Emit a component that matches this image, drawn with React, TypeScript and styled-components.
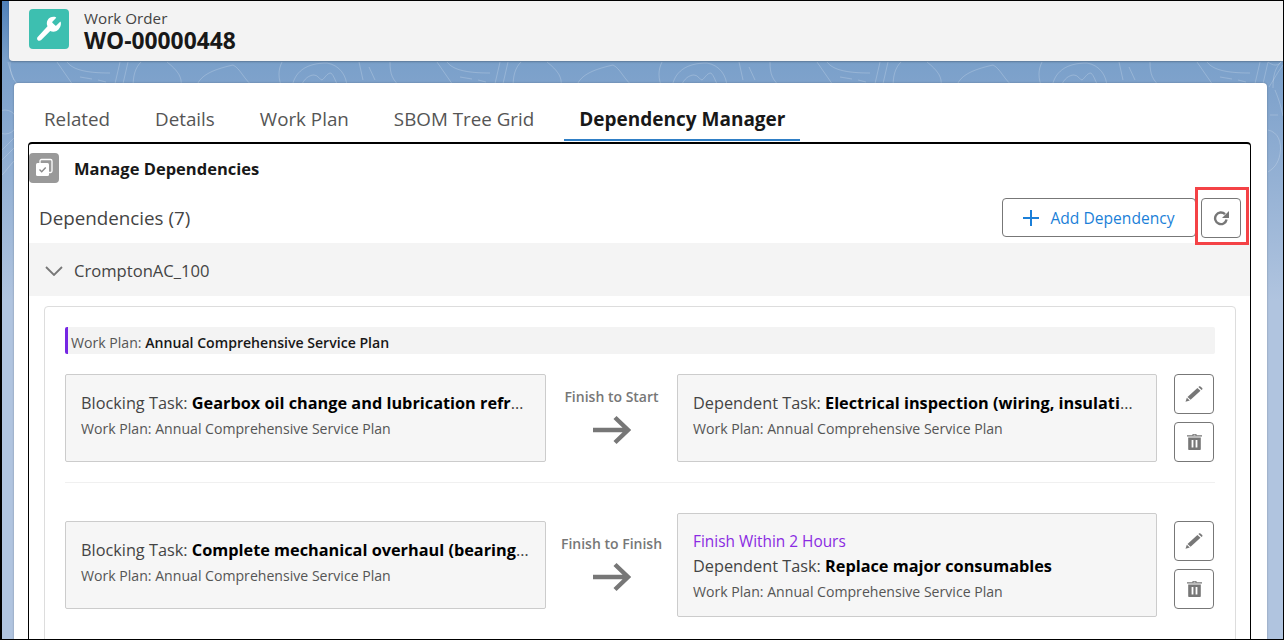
import styled, { createGlobalStyle } from 'styled-components'

const GlobalStyle = createGlobalStyle`
    html, body {
        margin: 0;
        padding: 0;
        height: 100%;
    }
    body {
        font-family: "Open Sans", "Noto Sans", "Liberation Sans", sans-serif;
        color: #181818;
        overflow: hidden;
    }
`
const Page = styled.div`
    position: relative;
    box-sizing: border-box;
    width: 1284px;
    height: 640px;
    overflow: hidden;
    border: 1px solid #000;
    border-left-width: 2px;
    background: linear-gradient(180deg, #4f80b8 0, #7aa0ca 60px, #80a3cc 90px, #b0c4df 300px, #b0c4df 100%);
`
const Contours = styled.svg`
    position: absolute;
    left: -2px;
    top: -1px;
    width: 1284px;
    height: 640px;
`
const Layers = styled.div`
    position: relative;
    display: flex;
    flex-direction: column;
    padding-left: 7px;
`
const Highlight = styled.div`
    box-sizing: border-box;
    position: absolute;
    left: 1193px;
    top: 186px;
    width: 54px;
    height: 58px;
    border: 3px solid #f44246;
`
const Header = styled.header`
    box-sizing: border-box;
    height: 60px;
    display: flex;
    align-items: flex-start;
    gap: 15px;
    padding: 8px 20px 0;
    background: #f3f3f3;
    border-radius: 0 0 0 4px;
    box-shadow: 0 1px 2px rgba(0, 0, 0, 0.25);
`
const ObjectIcon = styled.div`
    width: 40px;
    height: 40px;
    border-radius: 4px;
    background: #3dbfb0;
    display: flex;
    align-items: center;
    justify-content: center;
`
const ObjectText = styled.div`
    display: flex;
    flex-direction: column;
`
const ObjectType = styled.div`
    font-size: 15.2px;
    line-height: 19px;
    color: #444;
`
const ObjectName = styled.div`
    font-size: 22.800px;
    line-height: 25px;
    font-weight: 700;
    color: #181818;
`
const Card = styled.main`
    box-sizing: border-box;
    margin: 22px 16px 0 5px;
    height: 560px;
    background: #fff;
    border-radius: 4px 4px 0 0;
    padding: 15px 16px 0 14px;
    box-shadow: 0 0 2px rgba(0, 0, 0, 0.3);
`
const Tabs = styled.nav`
    display: flex;
    height: 44px;
    padding-left: 1px;
`
const Tab = styled.div<{ $active?: boolean }>`
    box-sizing: border-box;
    height: 43px;
    padding: 8px 15px 0;
    margin-right: 15px;
    font-size: ${props => (props.$active ? '19px' : '18.8px')};
    line-height: 27px;
    color: ${props => (props.$active ? '#181818' : '#555')};
    font-weight: ${props => (props.$active ? 700 : 400)};
    border-bottom: 2px solid ${props => (props.$active ? '#2f7fc6' : 'transparent')};
`
const Panel = styled.section`
    box-sizing: border-box;
    height: 520px;
    border: 1px solid #000;
    border-top-width: 2px;
    border-radius: 4px 4px 0 0;
`
const TitleRow = styled.div`
    display: flex;
    align-items: center;
    height: 30px;
    margin-top: 9px;
    gap: 15px;
`
const TitleIcon = styled.div`
    width: 30px;
    height: 30px;
    border-radius: 4px;
    background: #999;
    display: flex;
    align-items: center;
    justify-content: center;
`
const Title = styled.h1`
    margin: 0;
    padding-top: 2px;
    font-size: 16.500px;
    line-height: 22px;
    font-weight: 700;
    color: #181818;
`
const ListBar = styled.div`
    box-sizing: border-box;
    display: flex;
    align-items: flex-start;
    justify-content: space-between;
    height: 60px;
    padding: 15px 9px 0 10px;
`
const ListTitle = styled.div`
    font-size: 18.800px;
    line-height: 40px;
    color: #444;
`
const ListActions = styled.div`
    display: flex;
    align-items: flex-start;
    gap: 5px;
`
const AddButton = styled.button`
    box-sizing: border-box;
    width: 194px;
    height: 39px;
    display: flex;
    align-items: center;
    justify-content: center;
    gap: 11px;
    background: #fff;
    border: 1px solid #777;
    border-radius: 4px;
    color: #1b7fd8;
    font: inherit;
    font-size: 15.600px;
`
const IconButton = styled.button`
    box-sizing: border-box;
    width: 40px;
    height: 40px;
    padding: 0;
    display: flex;
    align-items: center;
    justify-content: center;
    background: #fff;
    border: 1px solid #777;
    border-radius: 4px;
`
const GroupHeader = styled.div`
    box-sizing: border-box;
    display: flex;
    align-items: center;
    gap: 11px;
    height: 53px;
    padding: 2px 0 0 16px;
    background: #f4f4f4;
    font-size: 16.600px;
    color: #444;
`
const GroupBody = styled.div`
    box-sizing: border-box;
    margin: 10px 14px 0 15px;
    height: 340px;
    border: 1px solid #ddd;
    border-radius: 4px;
    padding: 20px 20px 0;
`
const PlanBar = styled.div`
    box-sizing: border-box;
    height: 27px;
    display: flex;
    align-items: center;
    padding: 3px 0 0 3px;
    background: #f3f3f3;
    border-left: 3px solid #7526e3;
    border-radius: 2px;
    font-size: 14.100px;
    color: #555;
`
const Strong = styled.span`
    font-weight: 600;
    color: #181818;
    white-space: pre;
`
const Row = styled.div<{ $first?: boolean, $last?: boolean }>`
    display: grid;
    grid-template-columns: 481px 131px 480px 58px;
    align-items: center;
    padding: ${props => (props.$first ? '20px' : '30px')} 0 20px;
    border-bottom: ${props => (props.$last ? 'none' : '1px solid #f0f0f0')};
`
const TaskBox = styled.div`
    box-sizing: border-box;
    display: flex;
    flex-direction: column;
    min-width: 0;
    min-height: 88px;
    padding: 17px 15px 14px;
    background: #f6f6f6;
    border: 1px solid #ccc;
    border-radius: 2px;
`
const TaskName = styled.div`
    font-size: 16.300px;
    line-height: 22px;
    color: #444;
    white-space: nowrap;
    overflow: hidden;
    text-overflow: ellipsis;
`
const TaskTitle = styled(Strong)`
    font-weight: 700;
    color: #000;
`
const TaskPlan = styled.div`
    font-size: 14.100px;
    line-height: 20px;
    margin-top: 5px;
    color: #555;
`
const Lag = styled.div`
    font-size: 15.400px;
    line-height: 20px;
    margin: 1px 0 3px;
    color: #8a2be2;
`
const Link = styled.div`
    display: flex;
    flex-direction: column;
    align-items: center;
    gap: 8px;
    margin-bottom: 4px;
    font-size: 14px;
    line-height: 20px;
    font-weight: 600;
    color: #777;
`
const RowActions = styled.div`
    display: flex;
    flex-direction: column;
    align-items: flex-end;
    gap: 8px;
    padding-right: 1px;
`

const Wrench = () => (
    <svg width="26" height="26" viewBox="0 0 26 26" fill="#fff">
        <path d="M24.800 6.200c-.1-.4-.6-.5-.9-.2l-3.600 3.600c-.3.3-.7.3-1 0l-2.900-2.900c-.3-.3-.3-.7 0-1l3.600-3.600c.3-.3.2-.8-.2-.9-3-.9-6.500 0-8.100 2.900-1.200 2-1.100 4.300-.2 6.200L1.900 20.800c-1.100 1-1.100 2.600-.1 3.400.9.900 2.400.800 3.400-.2l9-8.900c1.900.9 4.300 1 6.300-.1 3-1.700 5-5.600 4.300-8.800z" />
    </svg>
)
const Stack = () => (
    <svg width="20" height="20" viewBox="0 0 20 20">
        <rect x="6" y="1.500" width="12" height="13" rx="1.500" fill="none" stroke="#fff" strokeWidth="1.300" />
        <rect x="2" y="5" width="13" height="13" rx="1.500" fill="#fff" />
        <path d="M5.500 11.500l2.200 2.200 4-4.200" fill="none" stroke="#888" strokeWidth="1.400" />
    </svg>
)
const Plus = () => (
    <svg width="16" height="16" viewBox="0 0 16 16" stroke="#1b7fd8" strokeWidth="2">
        <path d="M8 0v16M0 8h16" />
    </svg>
)
const Refresh = () => (
    <svg width="17" height="16" viewBox="0 0 17 16" fill="none">
        <path d="M13.600 9.500A5.800 5.800 0 1 1 12 4.200" stroke="#777" strokeWidth="2.400" />
        <path d="M16 1v7h-7z" fill="#777" />
    </svg>
)
const Chevron = () => (
    <svg width="18" height="10" viewBox="0 0 18 10" fill="none" stroke="#777" strokeWidth="1.800">
        <path d="M1 1l8 8 8-8" />
    </svg>
)
const Arrow = () => (
    <svg width="38" height="30" viewBox="0 0 38 30" fill="none" stroke="#777" strokeWidth="4.400">
        <path d="M0 15h34M22 2.500l13 12.500-13 12.500" />
    </svg>
)
const Pencil = () => (
    <svg width="18" height="16" viewBox="0 0 18 16" fill="#777">
        <path d="M12.400 2l3.100 2.800L5.600 13.800l-3.100-2.800zM13.400 1.100l.6-.6c.4-.4 1-.4 1.400 0l1.800 1.600c.4.4.4 1 0 1.400l-.6.6zM1.800 11.800l3 2.700-4.300 1.300z" />
    </svg>
)
const Trash = () => (
    <svg width="15" height="16" viewBox="0 0 15 16" fill="#777">
        <path d="M5.500 0h4v1.200h5.500v1.300H0V1.200h5.500zM6.500 .8v.6h2V.8zM1.200 3.500h12.600V15c0 .6-.4 1-1 1H2.200c-.6 0-1-.4-1-1zM4.600 6v7.500h1.800V6zm4 0v7.500h1.800V6z" fillRule="evenodd" />
    </svg>
)

type Task = { label: string, name: string, lag?: string }
type Dependency = { link: string, blocking: Task, dependent: Task }

const PLAN = 'Annual Comprehensive Service Plan'

const dependencies: Dependency[] = [
    {
        link: 'Finish to Start',
        blocking: { label: 'Blocking Task', name: 'Gearbox oil change and lubrication refresh' },
        dependent: { label: 'Dependent Task', name: 'Electrical inspection (wiring, insulation)' },
    },
    {
        link: 'Finish to Finish',
        blocking: { label: 'Blocking Task', name: 'Complete mechanical overhaul (bearings, seals)' },
        dependent: { label: 'Dependent Task', name: 'Replace major consumables', lag: 'Finish Within 2 Hours' },
    },
]

const TaskCard = ({ label, name, lag }: Task) => (
    <TaskBox>
        {lag && <Lag>{lag}</Lag>}
        <TaskName>{label}: <TaskTitle>{name}</TaskTitle></TaskName>
        <TaskPlan>Work Plan: {PLAN}</TaskPlan>
    </TaskBox>
)

export default function App() {
    return (
        <Page>
            <GlobalStyle />
            <Contours viewBox="0 0 1284 640" fill="none" stroke="#fff" strokeOpacity="0.2">
                <defs>
                    <pattern id="contour" x="0" y="0" width="380" height="640" patternUnits="userSpaceOnUse">
                        <path d="M10 62c0 12 2 18 12 26M57 62l18 26M67 62c6 8 20 11 43 11M80 77l12 2M98 80l8 2M120 62l-6 26M128 62l-6 26M141 62c-6 6-8 14-8 26M167 62c10 8 17 16 13 26M196 88c3-12 15-18 37-23 8 4 10 14 22 23M282 62c-4 8-4 16 0 26M292 88c2-16 14-25 35-25 12 2 20 12 20 25M302 84c4-8 10-9 12-9 4 0 6 5 8 5 3-2 5-7 9-7 3 3 4 7 6 11M359 62l4 18M369 67l6 13" />
                    </pattern>
                </defs>
                <rect x="0" y="60" width="1284" height="30" fill="url(#contour)" stroke="none" />
                <path d="M1268 62c8 6 12 2 15 -2M1283 65c-6 8-10 16-14 22M1270 115h8M1268 130c10 2 14 12 12 24-2 10-6 14-12 18M1275 90c4 10 6 16 8 26M5 110a12 12 0 1 0 .1 0M2 150c4-4 8-8 12-12M2 160c4-4 8-8 12-12M2 175c4-4 8-10 12-14M8 62c2 8 4 12 6 18" />
            </Contours>
            <Layers>
                <Header>
                    <ObjectIcon><Wrench /></ObjectIcon>
                    <ObjectText>
                        <ObjectType>Work Order</ObjectType>
                        <ObjectName>WO-00000448</ObjectName>
                    </ObjectText>
                </Header>
                <Card>
                    <Tabs>
                        <Tab>Related</Tab>
                        <Tab>Details</Tab>
                        <Tab>Work Plan</Tab>
                        <Tab>SBOM Tree Grid</Tab>
                        <Tab $active>Dependency Manager</Tab>
                    </Tabs>
                    <Panel>
                        <TitleRow>
                            <TitleIcon><Stack /></TitleIcon>
                            <Title>Manage Dependencies</Title>
                        </TitleRow>
                        <ListBar>
                            <ListTitle>Dependencies (7)</ListTitle>
                            <ListActions>
                                <AddButton><Plus />Add Dependency</AddButton>
                                <IconButton aria-label="Refresh"><Refresh /></IconButton>
                            </ListActions>
                        </ListBar>
                        <GroupHeader><Chevron />CromptonAC_100</GroupHeader>
                        <GroupBody>
                            <PlanBar>Work Plan:&nbsp;<Strong>{PLAN}</Strong></PlanBar>
                            {dependencies.map((item, index) => (
                                <Row key={item.link} $first={index === 0} $last={index === dependencies.length - 1}>
                                    <TaskCard {...item.blocking} />
                                    <Link>{item.link}<Arrow /></Link>
                                    <TaskCard {...item.dependent} />
                                    <RowActions>
                                        <IconButton aria-label="Edit"><Pencil /></IconButton>
                                        <IconButton aria-label="Delete"><Trash /></IconButton>
                                    </RowActions>
                                </Row>
                            ))}
                        </GroupBody>
                    </Panel>
                </Card>
            </Layers>
            <Highlight />
        </Page>
    )
}
